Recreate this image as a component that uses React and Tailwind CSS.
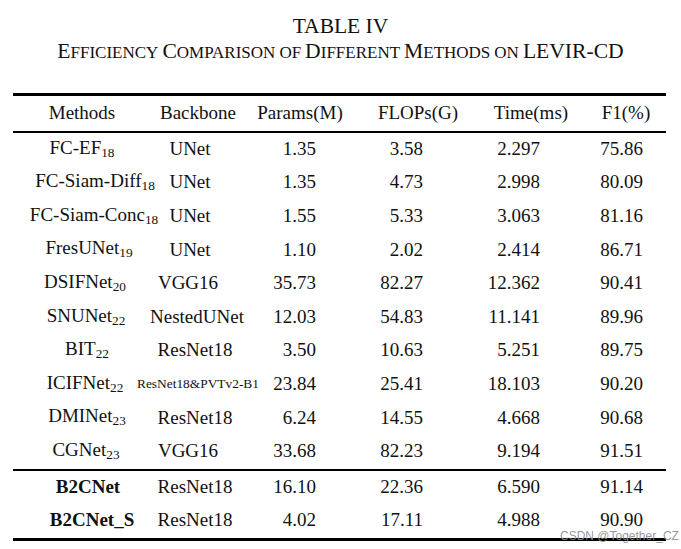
import React from "react";

const rows = [
  { m: "FC-EF", sub: "18", mc: "pr-[10px]", b: "UNet", bc: "pr-[10px]", p: "1.35", f: "3.58", t: "2.297", s: "75.86" },
  { m: "FC-Siam-Diff", sub: "18", mc: "pl-[16px]", b: "UNet", bc: "pr-[10px]", p: "1.35", f: "4.73", t: "2.998", s: "80.09" },
  { m: "FC-Siam-Conc", sub: "18", mc: "pl-[14px]", b: "UNet", bc: "pr-[10px]", p: "1.55", f: "5.33", t: "3.063", s: "81.16" },
  { m: "FresUNet", sub: "19", mc: "pl-[4px]", b: "UNet", bc: "pr-[10px]", p: "1.10", f: "2.02", t: "2.414", s: "86.71" },
  { m: "DSIFNet", sub: "20", mc: "pr-[4px]", b: "VGG16", bc: "pr-[14px]", p: "35.73", f: "82.27", t: "12.362", s: "90.41" },
  { m: "SNUNet", sub: "22", mc: "pr-[2px]", b: "NestedUNet", bc: "pl-[4px]", p: "12.03", f: "54.83", t: "11.141", s: "89.96" },
  { m: "BIT", sub: "22", mc: "", b: "ResNet18", bc: "", p: "3.50", f: "10.63", t: "5.251", s: "89.75" },
  { m: "ICIFNet", sub: "22", mc: "pr-[4px]", b: "ResNet18&PVTv2-B1", bc: "pl-[6px] text-[13.4px]", p: "23.84", f: "25.41", t: "18.103", s: "90.20" },
  { m: "DMINet", sub: "23", mc: "", b: "ResNet18", bc: "", p: "6.24", f: "14.55", t: "4.668", s: "90.68" },
  { m: "CGNet", sub: "23", mc: "pr-[2px]", b: "VGG16", bc: "pr-[14px]", p: "33.68", f: "82.23", t: "9.194", s: "91.51" },
];

const ours = [
  { m: "B2CNet", mc: "pl-[2px]", b: "ResNet18", bc: "", p: "16.10", f: "22.36", t: "6.590", s: "91.14" },
  { m: "B2CNet_S", mc: "pl-[10px]", b: "ResNet18", bc: "", p: "4.02", f: "17.11", t: "4.988", s: "90.90" },
];

function Row({ r, bold }) {
  return (
    <div className="flex h-[33.6px] items-center pb-[3px] leading-none">
      <div className={"flex w-[148px] justify-center whitespace-nowrap " + r.mc}>
        <span className={bold ? "font-bold" : ""}>
          {r.m}
          {r.sub && <span className="text-[13.3px] align-[-3px]">{r.sub}</span>}
        </span>
      </div>
      <div className={"flex w-[68px] justify-center whitespace-nowrap " + r.bc}>
        <span>{r.b}</span>
      </div>
      <div className="flex w-[131px] justify-end pr-[44px]">{r.p}</div>
      <div className="flex w-[115px] justify-end pr-[52px]">{r.f}</div>
      <div className="flex w-[110px] justify-end pr-[45px]">{r.t}</div>
      <div className="flex w-[81px] justify-end pr-[23px]">{r.s}</div>
    </div>
  );
}

function SC({ big, small }) {
  return (
    <span>
      <span className="text-[21.6px]">{big}</span>
      <span className="text-[17px]">{small}</span>
    </span>
  );
}

export default function App() {
  return (
    <div
      className="relative h-[549px] w-[681px] overflow-hidden bg-white text-[#111]"
      style={{ fontFamily: '"Liberation Serif", "Times New Roman", serif' }}
    >
      <div className="pt-[14px] text-center">
        <div className="text-[21.5px] leading-[25px]">TABLE IV</div>
        <div className="leading-[24px] whitespace-nowrap">
          <SC big="E" small="FFICIENCY" /> <SC big="C" small="OMPARISON" />{" "}
          <span className="text-[17px]">OF</span> <SC big="D" small="IFFERENT" />{" "}
          <SC big="M" small="ETHODS" /> <span className="text-[17px]">ON</span>{" "}
          <span className="text-[21.6px]">LEVIR-CD</span>
        </div>
      </div>

      <div className="ml-[13px] mt-[28px] w-[653px] text-[19px]">
        <div className="h-[3px] bg-black" />
        <div className="flex h-[35px] items-center pb-[2px] leading-none">
          <div className="flex w-[148px] justify-center pr-[10px]">Methods</div>
          <div className="flex w-[68px] justify-center pl-[6px] whitespace-nowrap">Backbone</div>
          <div className="flex w-[131px] justify-center pl-[11px] whitespace-nowrap">Params(M)</div>
          <div className="flex w-[115px] justify-center pl-[1px] whitespace-nowrap">FLOPs(G)</div>
          <div className="flex w-[110px] justify-center pl-[2px] whitespace-nowrap">Time(ms)</div>
          <div className="flex w-[81px] justify-center pl-[1px] whitespace-nowrap">F1(%)</div>
        </div>
        <div className="h-[2px] bg-black" />
        {rows.map((r) => (
          <Row key={r.m} r={r} />
        ))}
        <div className="h-[2px] bg-black" />
        {ours.map((r) => (
          <Row key={r.m} r={r} bold />
        ))}
        <div className="h-[3px] bg-black" />
      </div>

      <div
        className="absolute left-[560px] top-[530px] text-[12px] leading-none text-[#8c8c8c]/90 whitespace-nowrap"
        style={{ fontFamily: '"Liberation Sans", Arial, sans-serif' }}
      >
        CSDN @Together_CZ
      </div>
    </div>
  );
}
